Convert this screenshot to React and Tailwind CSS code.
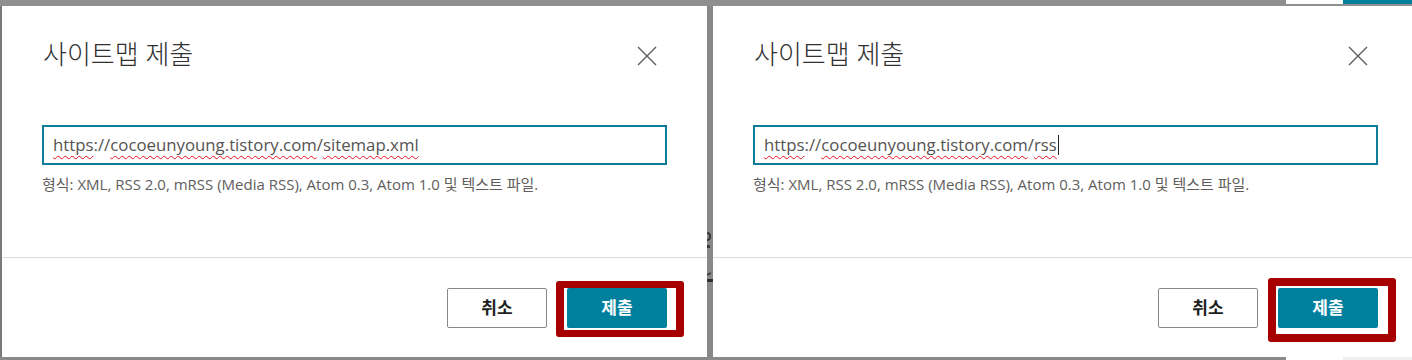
import React from "react";

const sans = "font-['Open_Sans','Noto_Sans_CJK_KR',sans-serif]";
const wavy = "underline decoration-wavy decoration-[#e81123] decoration-1 underline-offset-[4px]";

function CloseIcon() {
  return (
    <svg width="20" height="20" viewBox="0 0 20 20" className="block">
      <path d="M1 1 L19 19 M19 1 L1 19" stroke="#605e5c" strokeWidth="1.4" fill="none" />
    </svg>
  );
}

function Dialog({ width, last, caret, box }) {
  return (
    <div className={`relative bg-white h-[351px] shrink-0 flex flex-col ${sans}`} style={{ width }}>
      <div className="h-[119px] w-[655px] flex justify-between items-start pl-[41px] pt-[30px]">
        <div className="text-[26px] leading-[36px] text-[#323130] font-light">사이트맵 제출</div>
        <div className="mt-[10px]">
          <CloseIcon />
        </div>
      </div>
      <div className="pl-[40px]">
        <div className="w-[625px] h-[40px] border-2 border-[#0f7d9a] flex items-center pl-[9px] text-[16.8px] text-[#555352]">
          <span className={wavy}>https</span>
          <span>://</span>
          <span className={wavy}>cocoeunyoung.tistory.com</span>
          <span>/</span>
          <span className={wavy}>{last}</span>
          {caret && <span className="inline-block w-px h-[20px] bg-[#222] ml-[1px]"></span>}
        </div>
        <div className="mt-[9px] text-[15px] leading-[20px] text-[#605e5c]">
          형식: XML, RSS 2.0, mRSS (Media RSS), Atom 0.3, Atom 1.0 및 텍스트 파일.
        </div>
      </div>
      <div className="mt-[63px] h-px bg-[#dcdcdc]"></div>
      <div className="flex gap-[20px] pl-[445px] pt-[30px]">
        <button className="w-[100px] h-[40px] border border-[#8a8886] rounded-[2px] bg-white text-[17px] font-bold text-[#201f1e]">
          취소
        </button>
        <button className="w-[100px] h-[40px] rounded-[2px] bg-[#00809d] text-[17px] font-bold text-white">
          제출
        </button>
      </div>
      <div
        className="absolute border-[#a60000] rounded-[3px] pointer-events-none"
        style={box}
      ></div>
    </div>
  );
}

export default function App() {
  return (
    <div className="w-[1412px] h-[360px] bg-[#8c8c8c] flex flex-col overflow-hidden">
      <div className="h-[6px] flex shrink-0">
        <div className="flex-1 bg-[#8f8f8f]"></div>
        <div className="w-[57px] flex flex-col">
          <div className="h-[4px] bg-white"></div>
          <div className="flex-1 bg-[#8f8f8f]"></div>
        </div>
        <div className="w-[69px] flex flex-col">
          <div className="h-[4px] bg-[#00809d]"></div>
          <div className="flex-1 bg-[#8f8f8f]"></div>
        </div>
      </div>
      <div className="flex h-[351px] shrink-0">
        <div className="w-[2px] bg-[#7a7a7a]"></div>
        <Dialog
          width={705}
          last="sitemap.xml"
          box={{ left: 554, top: 275, width: 128, height: 56, borderWidth: "7px 8px 7px 8px" }}
        />
        <div className="w-[6px] bg-[#888888] flex flex-col">
          <div className="h-[226px]"></div>
          <div className="h-[9px] w-[4px] rounded-r-full border-2 border-l-0 border-[#3a3a3a]"></div>
          <div className="mt-[4px] h-[3px] w-[3px] bg-[#3a3a3a]"></div>
          <div className="mt-[25px] h-[2px] w-[4px] bg-[#3a3a3a] -rotate-[30deg]"></div>
          <div className="mt-[4px] h-[3px] w-[6px] bg-[#2f2f2f]"></div>
        </div>
        <Dialog
          width={699}
          last="rss"
          caret
          box={{ left: 555, top: 272, width: 128, height: 64, borderWidth: "8px" }}
        />
      </div>
      <div className="flex-1 flex">
        <div className="w-[1286px] bg-[#8a8a8a]"></div>
        <div className="w-[57px] bg-white"></div>
        <div className="flex-1 bg-[#f0f0f0]"></div>
      </div>
    </div>
  );
}
